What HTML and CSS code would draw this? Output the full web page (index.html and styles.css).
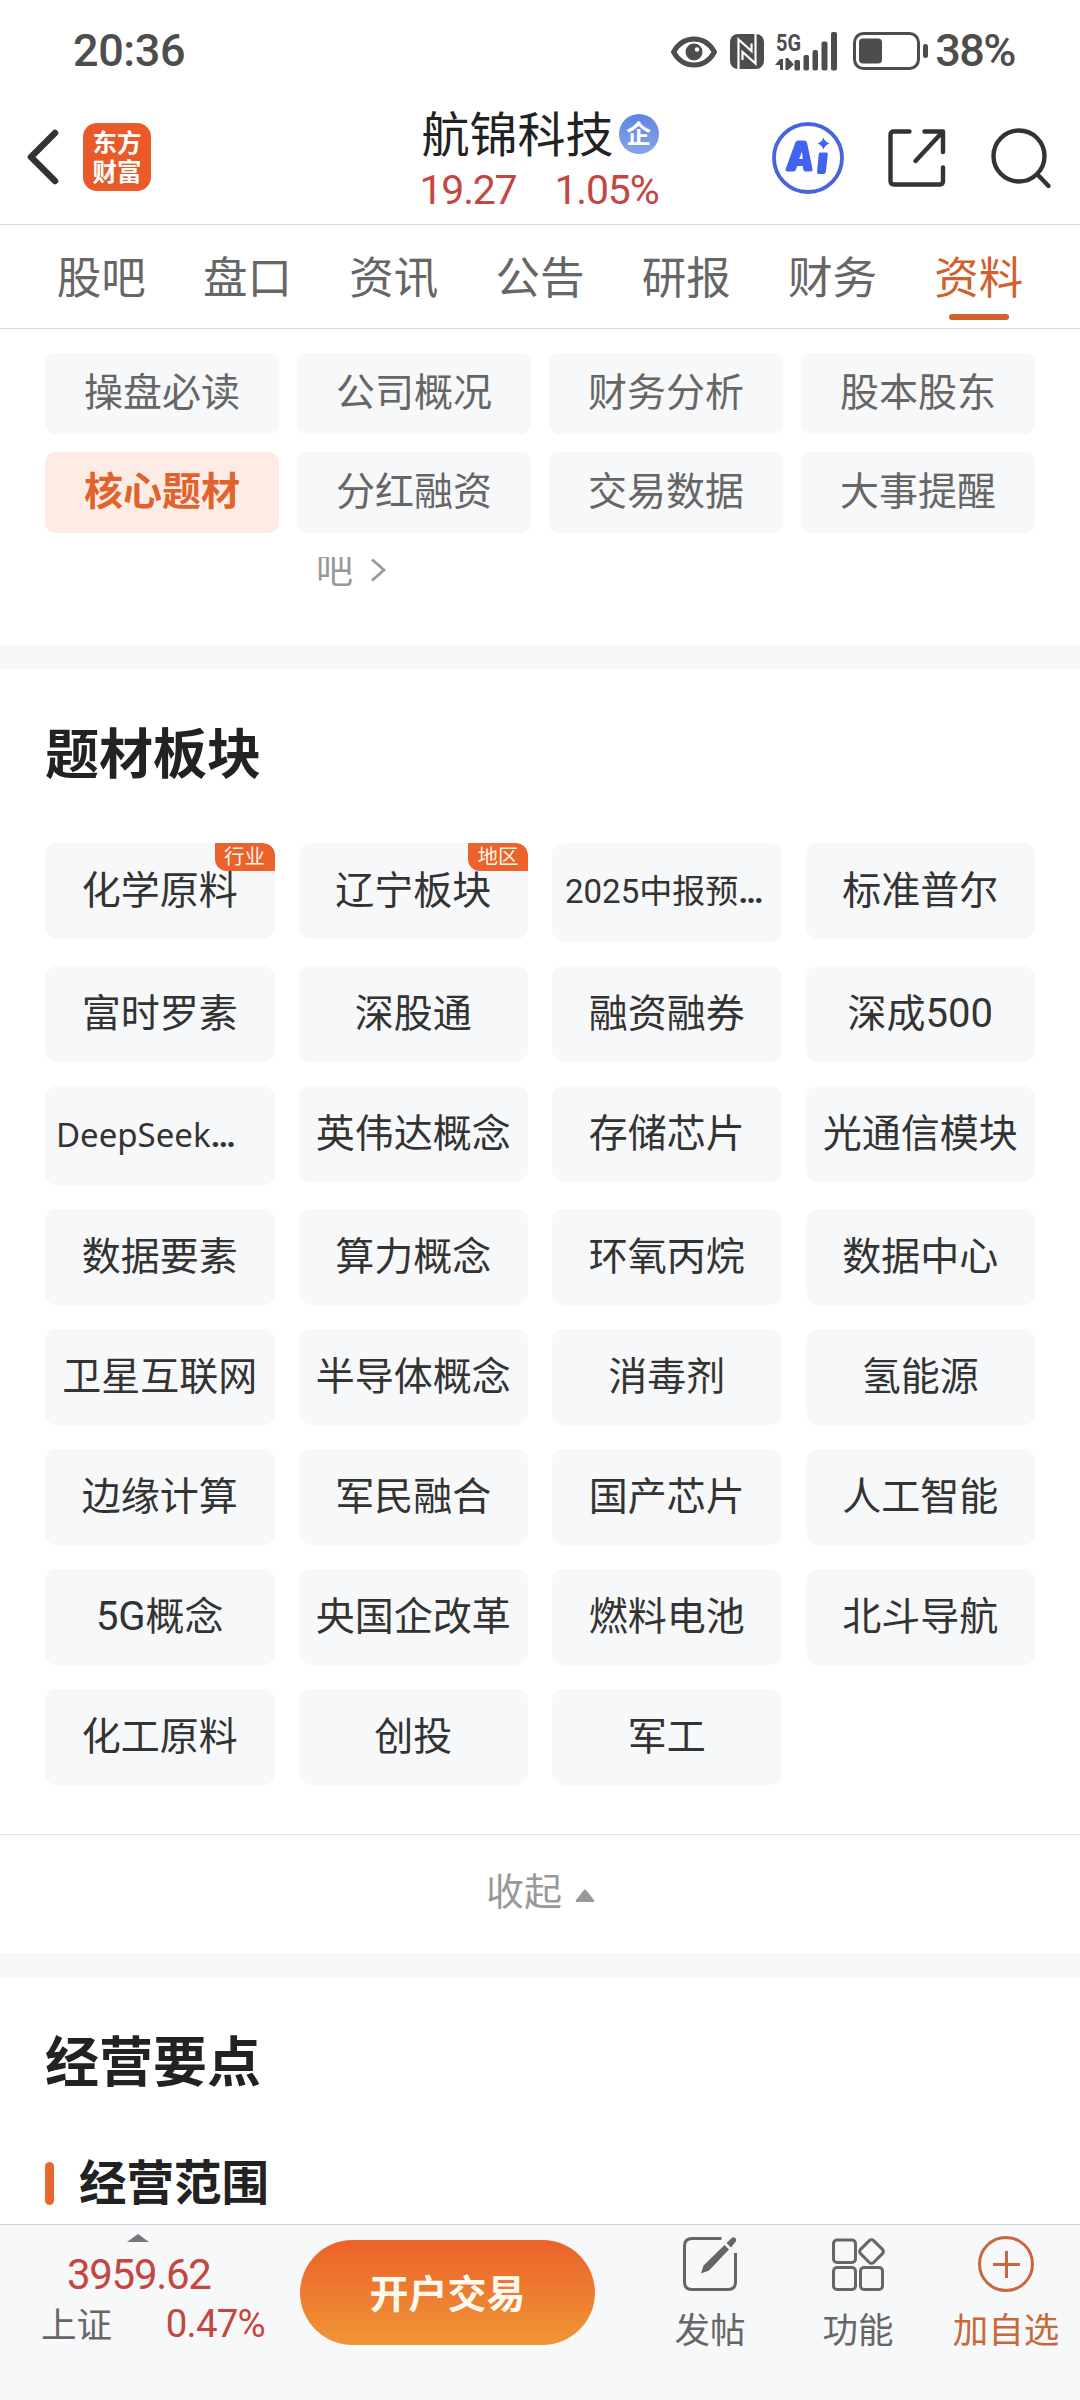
FILE: index.html
```html
<!DOCTYPE html>
<html lang="zh-CN">
<head>
<meta charset="utf-8">
<title>航锦科技</title>
<link rel="stylesheet" href="styles.css">
</head>
<body>
<div class="app">
  <div class="status">
    <span class="time">20:36</span>
    <div class="status-right">
      <svg class="ic-eye" width="46" height="32" viewBox="0 0 46 32"><path d="M2.500 16C7 8 14.500 3 23 3s16 5 20.500 13C39 24 31.500 29 23 29S7 24 2.500 16z" fill="none" stroke="#4d4d4d" stroke-width="5" stroke-linejoin="round"/><circle cx="23" cy="16" r="8.500" fill="#4d4d4d"/><circle cx="26" cy="13.500" r="2.200" fill="#fff"/></svg>
      <svg class="ic-nfc" width="34" height="35" viewBox="0 0 34 35"><rect width="34" height="35" rx="8" fill="#4d4d4d"/><path d="M8.500 36V5.500L21.500 17V9.500M25.500-1V29.500L12.500 18v8" fill="none" stroke="#fff" stroke-width="2.200"/></svg>
      <svg class="ic-signal" width="63" height="39" viewBox="0 0 63 39"><text x="1" y="18.500" class="net" textLength="25" lengthAdjust="spacingAndGlyphs">5G</text><g fill="#4d4d4d"><path d="M0 33l5-6h3v11H5v-5zM10.500 26h2.500l5.500 6v1l-5.500 5h-2.500z"/><rect x="19.500" y="28" width="5.500" height="10.500" rx="1.500"/><rect x="28.500" y="23" width="5.500" height="15.500" rx="2"/><rect x="37.500" y="18" width="5.500" height="20.500" rx="2"/><rect x="46.500" y="9.500" width="6" height="29" rx="2"/><rect x="56" y="0" width="6" height="38.500" rx="2"/></g></svg>
      <svg class="ic-battery" width="76" height="38" viewBox="0 0 76 38"><rect x="1.500" y="1.500" width="64" height="35" rx="9" fill="none" stroke="#4d4d4d" stroke-width="3"/><rect x="6" y="6.500" width="23" height="25" rx="4" fill="#4d4d4d"/><rect x="70" y="12" width="5" height="14" rx="2.500" fill="#4d4d4d"/></svg>
      <span class="percent">38%</span>
    </div>
  </div>

  <header class="header">
    <div class="header-left">
      <svg width="33" height="56" viewBox="0 0 33 56"><path d="M29 4L5 28l24 24" fill="none" stroke="#333" stroke-width="6.500" stroke-linecap="round" stroke-linejoin="round"/></svg>
      <div class="logo"><span>东方</span><span>财富</span></div>
    </div>
    <div class="stock">
      <div class="stock-name"><span>航锦科技</span><i class="corp">企</i></div>
      <div class="stock-quote"><span>19.27</span><span>1.05%</span></div>
    </div>
    <div class="header-right">
      <svg width="72" height="74" viewBox="0 0 72 74"><circle cx="36" cy="37" r="34" fill="none" stroke="#4763df" stroke-width="3.800"/><path fill="#4263f0" fill-rule="evenodd" d="M23.500 21q1-1.500 2.500-1.500h6q2.500 0 3 2l5.500 26.500q.3 2.500-2 2.500h-5q-2 0-2.200-2l-.5-3.500h-5.500l-1.300 3.500q-.8 2-2.500 2h-6q-2.500 0-1.800-2.500zM27.200 38h3.500l-.7-7.500zM48.500 31.500h6q1.500 0 1.300 2l-2 17.500q-.3 2-2 2h-5q-2 0-1.800-2l1.700-17.500q.2-2 1.800-2zM51.500 16.500q1.500 4.500 6 6-4.500 1.500-6 6-1.500-4.500-6-6 4.500-1.500 6-6z"/></svg>
      <svg width="60" height="60" viewBox="0 0 60 60" fill="none" stroke="#333" stroke-width="4.400" stroke-linecap="round" stroke-linejoin="round"><path d="M22.500 3.500H7q-3.500 0-3.500 3.500v46q0 3.500 3.500 3.500h46q3 0 3-3.500V39.500M37.500 3.500H56v20.500M55 4.500L28.500 33"/></svg>
      <svg width="62" height="62" viewBox="0 0 62 62" fill="none" stroke="#333" stroke-width="4.400" stroke-linecap="round"><circle cx="29" cy="29" r="25.500"/><path d="M47.500 47.500L58.500 59"/></svg>
    </div>
  </header>

  <nav class="tabs">
    <span>股吧</span><span>盘口</span><span>资讯</span><span>公告</span><span>研报</span><span>财务</span><span class="on">资料</span>
  </nav>

  <nav class="subnav">
    <span>操盘必读</span><span>公司概况</span><span>财务分析</span><span>股本股东</span>
    <span class="on">核心题材</span><span>分红融资</span><span>交易数据</span><span>大事提醒</span>
  </nav>

  <div class="cut">
    <span>吧</span>
    <svg width="18" height="26" viewBox="0 0 18 26"><path d="M3 2.500L15 13 3 23.500" fill="none" stroke="#999" stroke-width="2.800"/></svg>
  </div>

  <section class="themes">
    <h2>题材板块</h2>
    <div class="grid">
      <div class="chip">化学原料<i class="badge">行业</i></div><div class="chip">辽宁板块<i class="badge">地区</i></div><div class="chip long">2025中报预<b>…</b></div><div class="chip">标准普尔</div>
      <div class="chip">富时罗素</div><div class="chip">深股通</div><div class="chip">融资融券</div><div class="chip num">深成<b>500</b></div>
      <div class="chip long latin">DeepSeek<b>…</b></div><div class="chip">英伟达概念</div><div class="chip">存储芯片</div><div class="chip">光通信模块</div>
      <div class="chip">数据要素</div><div class="chip">算力概念</div><div class="chip">环氧丙烷</div><div class="chip">数据中心</div>
      <div class="chip">卫星互联网</div><div class="chip">半导体概念</div><div class="chip">消毒剂</div><div class="chip">氢能源</div>
      <div class="chip">边缘计算</div><div class="chip">军民融合</div><div class="chip">国产芯片</div><div class="chip">人工智能</div>
      <div class="chip num"><b>5G</b>概念</div><div class="chip">央国企改革</div><div class="chip">燃料电池</div><div class="chip">北斗导航</div>
      <div class="chip">化工原料</div><div class="chip">创投</div><div class="chip">军工</div>
    </div>
  </section>
  <div class="fold"><span>收起</span><svg width="20" height="13" viewBox="0 0 20 13"><path d="M9 1q1-1 2 0l8 10q1 2-1 2H2q-2 0-1-2z" fill="#999"/></svg></div>

  <section class="business">
    <h2>经营要点</h2>
    <h3>经营范围</h3>
  </section>

  <footer class="footer">
    <div class="index">
      <svg width="22" height="8" viewBox="0 0 22 8"><path d="M0 8L11 0l11 8z" fill="#77777b"/></svg>
      <div class="index-value">3959.62</div>
      <div class="index-row"><span class="index-name">上证</span><span class="index-pct">0.47%</span></div>
    </div>
    <div class="trade">开户交易</div>
    <div class="actions">
      <div class="action">
        <svg width="56" height="56" viewBox="0 0 56 56"><path d="M39.500 2.500H10q-7.500 0-7.500 7.500v36q0 7.500 7.500 7.500h36q7.500 0 7.500-7.500V17" fill="none" stroke="#666" stroke-width="3"/><path d="M19 37.500l2.500-8L42.500 9l4.500 4.500L27 34.500zM44.500 7L50 1.800q2-1 3.300.3 1.500 1.500.5 3.400L49 11.500z" fill="#666"/></svg>
        <span>发帖</span>
      </div>
      <div class="action">
        <svg width="56" height="56" viewBox="0 0 56 56" fill="none" stroke="#666" stroke-width="3"><rect x="3.500" y="4" width="22" height="22.500" rx="3.500"/><rect x="3.500" y="31.500" width="22" height="22" rx="3.500"/><rect x="30.500" y="31.500" width="22" height="22" rx="3.500"/><rect x="32.200" y="6.300" width="18.500" height="18.500" rx="3" transform="rotate(45 41.500 15.600)"/></svg>
        <span>功能</span>
      </div>
      <div class="action add">
        <svg width="56" height="56" viewBox="0 0 56 56" fill="none" stroke="#c8683b" stroke-width="3"><circle cx="28" cy="28" r="26.500"/><path d="M28.500 15v27M15 28.500h27"/></svg>
        <span>加自选</span>
      </div>
    </div>
  </footer>
</div>
</body>
</html>
```
FILE: styles.css
```css
* { box-sizing: border-box; margin: 0; padding: 0; }
i, b { font-style: normal; font-weight: inherit; }
svg { display: block; flex: none; overflow: visible; }
body { width: 1080px; height: 2400px; overflow: hidden; background: #fff; font-family: "Noto Sans CJK SC", sans-serif; color: #333; }
.app { height: 2400px; display: flex; flex-direction: column; }
.app > * { flex: none; }

.status { height: 100px; display: flex; justify-content: space-between; padding: 24px 65px 0 73px; color: #4d4d4d; font-family: Roboto, sans-serif; font-weight: 500; font-size: 45px; line-height: 54px; }
.time { letter-spacing: -.4px; }
.status-right { display: flex; align-items: flex-start; }
.ic-eye { margin: 12px 13px 0 0; }
.ic-nfc { margin: 10px 11px 0 0; overflow: hidden; }
.ic-signal { margin: 8px 15px 0 0; }
.ic-battery { margin: 8px 6px 0 0; }
.net { font: 700 24px Roboto, sans-serif; fill: #4d4d4d; }
.percent { letter-spacing: -1.5px; }

.header { height: 125px; display: grid; grid-template-columns: 1fr auto 1fr; border-bottom: 1px solid #d8d8d8; }
.header-left { display: flex; align-items: center; gap: 24px; padding: 0 0 10px 26px; }
.logo { width: 68px; height: 68px; border-radius: 14px; background: #ea5a28; color: #fff; font-weight: 700; font-size: 24.5px; line-height: 29px; display: flex; flex-direction: column; align-items: center; justify-content: center; padding-bottom: 3px; }
.stock { padding-top: 2px; }
.stock-name { display: flex; align-items: center; gap: 5px; font-size: 48px; line-height: 58px; color: #222; }
.corp { width: 40px; height: 40px; margin-top: 5px; border-radius: 50%; background: linear-gradient(#5f84de, #86a5eb); color: #fff; font-size: 25px; line-height: 37px; text-align: center; font-weight: 700; }
.stock-quote { display: flex; justify-content: space-between; margin: 2px 0 0 -2px; font-family: Roboto, sans-serif; font-size: 41px; line-height: 56px; color: #c5463f; letter-spacing: -1.2px; }
.header-right { display: flex; align-items: center; justify-content: flex-end; padding: 0 28px 9px 0; gap: 43px; }

.tabs { height: 104px; display: grid; grid-template-columns: repeat(7, 1fr); padding: 0 28px; border-bottom: 1px solid #d8d8d8; font-size: 44.500px; line-height: 99px; text-align: center; color: #666; }
.tabs .on { position: relative; color: #d0602c; }
.tabs .on::after { content: ""; position: absolute; left: 50%; bottom: 8px; width: 60px; height: 6px; margin-left: -30px; border-radius: 3px; background: #d0602c; }

.subnav { display: grid; grid-template-columns: repeat(4, 1fr); gap: 18px; padding: 24px 45px; font-size: 39px; line-height: 73px; text-align: center; color: #666; }
.subnav span { height: 81px; border-radius: 10px; background: #f7f8fa; }
.subnav .on { background: #fcece5; color: #e2622b; font-weight: 700; }

.cut { height: 88px; overflow: hidden; display: flex; gap: 16px; padding-left: 316px; color: #999; font-size: 37px; line-height: 37px; }
.cut span { margin-top: -7px; }

h2 { font-size: 54px; line-height: 80px; font-weight: 700; color: #222; }
.themes { border-top: 24px solid #f7f8fa; padding: 42px 45px 49px; }
.grid { display: grid; grid-template-columns: repeat(4, 1fr); gap: 24px; align-items: start; margin-top: 52px; }
.chip { position: relative; height: 96px; border-radius: 12px; background: #f7f8fa; font-size: 39px; line-height: 88px; text-align: center; white-space: nowrap; overflow: hidden; }
.num b { font-family: Roboto, sans-serif; font-size: 40px; }
.chip.long { height: 99px; padding-left: 13px; font-family: Roboto, "Noto Sans CJK SC", sans-serif; font-size: 33px; line-height: 97px; text-align: left; }
.long b { font-family: Roboto, sans-serif; font-weight: 700; font-size: 34px; }
.chip.latin { padding-left: 11px; font-family: "Noto Sans", sans-serif; }
.badge { position: absolute; top: 0; right: 0; width: 60px; height: 28px; border-radius: 0 12px 0 12px; background: #eb622b; color: #fff5e6; font-size: 20.500px; line-height: 25px; }

.fold { height: 119px; border-top: 1px solid #e2e2e2; display: flex; justify-content: center; align-items: center; gap: 13px; padding: 0 0 10px 1px; color: #999; font-size: 38px; line-height: 50px; }
.fold svg { margin-top: 12px; }
.business { flex: 1 1 0; border-top: 24px solid #f7f8fa; padding: 42px 45px 0; overflow: hidden; }
h3 { display: flex; align-items: center; gap: 25px; margin-top: 46px; font-size: 47.500px; line-height: 70px; font-weight: 700; color: #222; }
h3::before { content: ""; width: 9px; height: 43px; margin-top: 6px; border-radius: 5px; background: #eb662f; }

.footer { height: 176px; display: flex; background: #f7f8fa; border-top: 1px solid #d4d4da; }
.index { width: 300px; padding: 9px 35px 0 41px; color: #c5463f; font-family: Roboto, sans-serif; }
.index svg { margin-left: 86px; }
.index-value { margin: 8px 0 0 26px; font-size: 42px; line-height: 50px; letter-spacing: -1.3px; }
.index-row { display: flex; justify-content: space-between; align-items: center; line-height: 48px; font-size: 38.500px; }
.index-name { margin-top: -3px; font-family: "Noto Sans CJK SC", sans-serif; font-size: 35.500px; color: #666; }
.index-pct { letter-spacing: -.8px; }
.trade { width: 295px; height: 105px; margin-top: 15px; border-radius: 53px; background: linear-gradient(#ec612a, #ef9636); color: #fffaf0; font-size: 39px; font-weight: 700; line-height: 102px; text-align: center; }
.actions { display: flex; margin-left: 41px; }
.action { width: 148px; display: flex; flex-direction: column; align-items: center; padding-top: 11px; font-size: 35.500px; line-height: 50px; color: #666; }
.action span { margin-top: 11px; }
.add { color: #c8683b; }
```
